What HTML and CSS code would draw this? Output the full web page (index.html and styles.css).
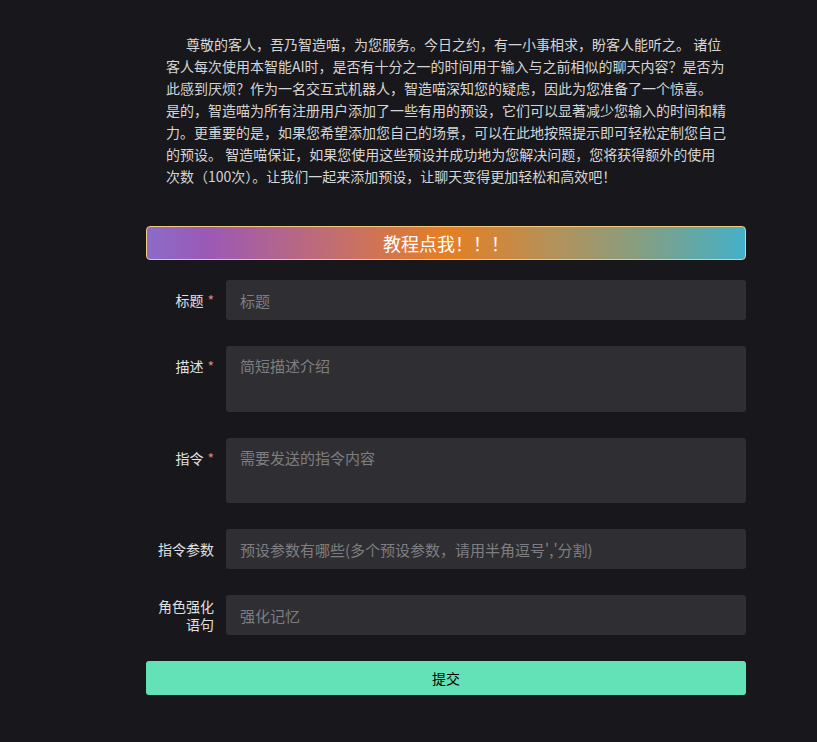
FILE: index.html
```html
<!DOCTYPE html>
<html lang="zh-CN">
<head>
<meta charset="utf-8">
<title>添加预设</title>
<link rel="stylesheet" href="styles.css">
</head>
<body>
<main class="page">
  <p class="intro">尊敬的客人，吾乃智造喵，为您服务。今日之约，有一小事相求，盼客人能听之。 诸位客人每次使用本智能AI时，是否有十分之一的时间用于输入与之前相似的聊天内容？是否为此感到厌烦？作为一名交互式机器人，智造喵深知您的疑虑，因此为您准备了一个惊喜。<br>是的，智造喵为所有注册用户添加了一些有用的预设，它们可以显著减少您输入的时间和精力。更重要的是，如果您希望添加您自己的场景，可以在此地按照提示即可轻松定制您自己的预设。 智造喵保证，如果您使用这些预设并成功地为您解决问题，您将获得额外的使用次数（100次）。让我们一起来添加预设，让聊天变得更加轻松和高效吧！</p>
  <button class="tutorial" type="button">教程点我！！！</button>
  <form class="form">
    <div class="item">
      <label class="label">标题<span class="req">*</span></label>
      <input class="input" placeholder="标题">
    </div>
    <div class="item">
      <label class="label label-top">描述<span class="req">*</span></label>
      <textarea class="input area area-desc" placeholder="简短描述介绍"></textarea>
    </div>
    <div class="item">
      <label class="label label-top">指令<span class="req">*</span></label>
      <textarea class="input area area-cmd" placeholder="需要发送的指令内容"></textarea>
    </div>
    <div class="item">
      <label class="label">指令参数</label>
      <input class="input" placeholder="预设参数有哪些(多个预设参数，请用半角逗号','分割)">
    </div>
    <div class="item">
      <label class="label">角色强化语句</label>
      <input class="input" placeholder="强化记忆">
    </div>
    <button class="submit" type="button">提交</button>
  </form>
</main>
</body>
</html>
```
FILE: styles.css
```css
html, body {
  margin: 0;
  padding: 0;
  background: #18181c;
}
body {
  font-family: "Noto Sans CJK SC", "Noto Sans", sans-serif;
  font-size: 14px;
  color: #d5d5d6;
}
.page {
  width: 600px;
  margin-left: 146px;
  padding-top: 33px;
}
.intro {
  margin: 0;
  padding: 0 20px;
  font-size: 14px;
  line-height: 22px;
  text-indent: 20px;
  color: #d5d5d6;
}
.tutorial {
  display: block;
  box-sizing: border-box;
  width: 600px;
  height: 34px;
  margin-top: 39px;
  padding: 0;
  border: 1px solid #f2c97d;
  border-radius: 4px;
  background: linear-gradient(90deg, #8b6cc9 0%, #9b59b6 10%, #c46e6e 32%, #e67e22 50%, #b4925a 68%, #879e80 82%, #45b1c9 100%);
  color: #fff;
  font-family: inherit;
  font-size: 18px;
  line-height: 32px;
  cursor: pointer;
}
.form {
  display: flex;
  flex-direction: column;
  gap: 26px;
  margin-top: 20px;
}
.item {
  display: flex;
  align-items: flex-start;
}
.label {
  box-sizing: border-box;
  flex: 0 0 80px;
  min-height: 40px;
  padding-right: 12px;
  display: flex;
  align-items: center;
  justify-content: flex-end;
  text-align: right;
  line-height: 18px;
  font-size: 14px;
  color: #e0e0e1;
}
.req {
  color: #e88080;
  margin-left: 4px;
}
.input {
  box-sizing: border-box;
  flex: 1 1 auto;
  min-width: 0;
  height: 40px;
  margin: 0;
  padding: 0 14px;
  border: none;
  border-radius: 3px;
  outline: none;
  background: #2f2f33;
  color: #fff;
  font-family: inherit;
  font-size: 15px;
}
.input::placeholder {
  color: #7e7e81;
}
.area {
  padding: 8px 14px;
  line-height: 24px;
  resize: none;
  display: block;
}
.area-desc {
  height: 66px;
}
.area-cmd {
  height: 65px;
}
.submit {
  display: block;
  width: 600px;
  height: 34px;
  margin: 0;
  padding: 0;
  border: none;
  border-radius: 3px;
  background: #63e2b7;
  color: #000;
  font-family: inherit;
  font-size: 14px;
  cursor: pointer;
}
```
